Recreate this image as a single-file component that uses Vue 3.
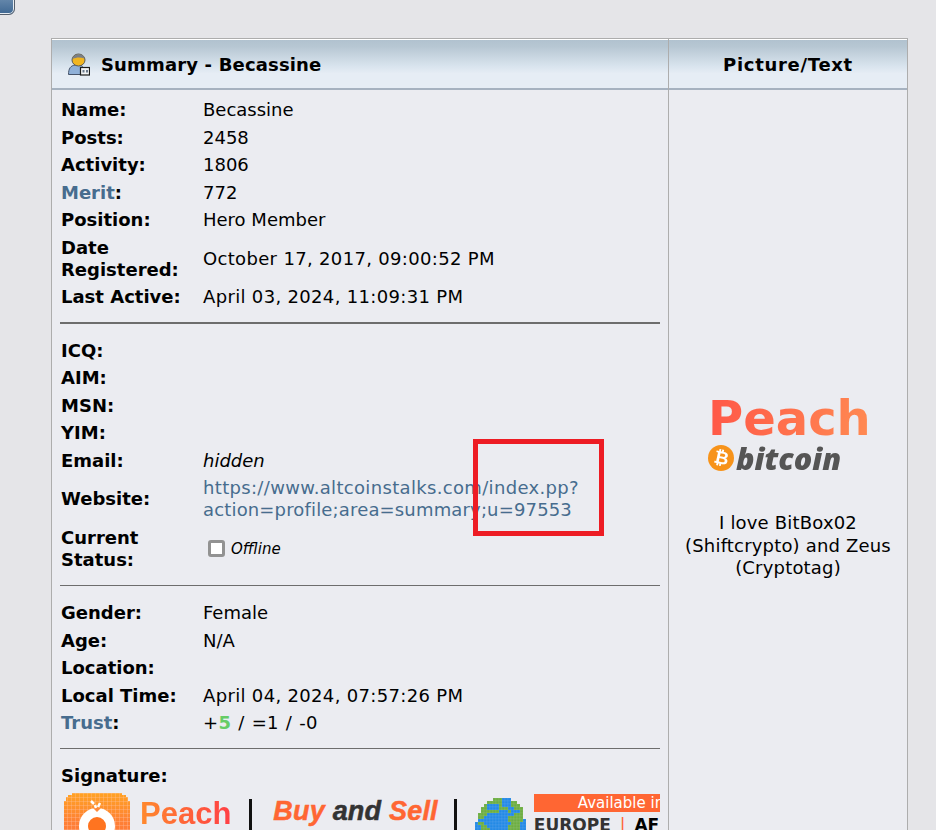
<script setup>
const group1 = [
  { label: 'Name:', value: 'Becassine' },
  { label: 'Posts:', value: '2458' },
  { label: 'Activity:', value: '1806' },
  { label: 'Merit', value: '772', link: true },
  { label: 'Position:', value: 'Hero Member' },
  { label: 'Date Registered:', value: 'October 17, 2017, 09:00:52 PM', wide: true },
  { label: 'Last Active:', value: 'April 03, 2024, 11:09:31 PM', wide: true },
]
const group2 = ['ICQ:', 'AIM:', 'MSN:', 'YIM:']
const group3 = [
  { label: 'Gender:', value: 'Female' },
  { label: 'Age:', value: 'N/A' },
  { label: 'Location:', value: '' },
  { label: 'Local Time:', value: 'April 04, 2024, 07:57:26 PM', wide: true },
]
const globeRows = [
  '......gggbbb.....',
  '....gggggbbbgg...',
  '...gbbbbgbbbggg..',
  '..ggbbbbgggbbggg.',
  '..ggggggbbbgbbbg.',
  '.gggbbbbbbbbbggg.',
  '.ggbbbbbbbbggggg.',
  '.bbbbbbbbbbgggggb',
  'bggbbbbbbbbbgggbb',
  'bbggbbbbbbbggggbb',
  'bbgggbbbbbbggggbb',
]
const globeCells = globeRows.flatMap((row, y) =>
  [...row].flatMap((c, x) =>
    c === '.' ? [] : [{ key: `${x}-${y}`, x: x * 3, y: y * 3, fill: c === 'g' ? '#6cae42' : '#2389e6' }],
  ),
)
</script>

<template>
  <div class="page">
    <div class="corner-button"></div>
    <div class="annotation"></div>
    <div class="table">
      <div class="left-col">
        <div class="head head-left">
          <svg class="user-icon" width="22" height="23" viewBox="0 0 22 23">
            <path d="M.5 21.500c0-6 2-9 7-9.500h5c2 .5 3 3 3 9.500z" fill="#8fb0d8" stroke="#45536a" stroke-width="1" />
            <ellipse cx="10.500" cy="7" rx="6.500" ry="6" fill="#f0b520" stroke="#5b5b55" stroke-width="1" />
            <path d="M4.500 6c1-6 11-6.500 12-.5-4-1.500-8-1.500-12 .5z" fill="#7a7f86" />
            <rect x="12.500" y="14.500" width="9" height="7.500" fill="#f2f4f6" stroke="#1c1c1c" stroke-width="1.200" />
            <path d="M14.500 17h2v2.500h-2zM18 17h2v2.500h-2z" fill="#6b7a8c" />
          </svg>
          <span class="head-title">Summary - Becassine</span>
        </div>
        <div class="body-left">
          <div class="rows">
            <template v-for="r in group1" :key="r.label">
              <div class="label"><span v-if="r.link"><a class="link">{{ r.label }}</a>:</span><template v-else>{{ r.label }}</template></div>
              <div class="value" :class="{ wide: r.wide }">{{ r.value }}</div>
            </template>
          </div>
          <hr class="rule thick" />
          <div class="rows">
            <template v-for="l in group2" :key="l">
              <div class="label">{{ l }}</div>
              <div class="value"></div>
            </template>
            <div class="label">Email:</div>
            <div class="value"><em>hidden</em></div>
            <div class="label">Website:</div>
            <div class="value link"><span class="wide">https://www.altcoinstalks.com/index.pp?</span><br /><span class="semi">action=profile;area=summary;u=97553</span></div>
            <div class="label">Current Status:</div>
            <div class="value status"><span class="box"></span><em>Offline</em></div>
          </div>
          <hr class="rule" />
          <div class="rows">
            <template v-for="r in group3" :key="r.label">
              <div class="label">{{ r.label }}</div>
              <div class="value" :class="{ wide: r.wide }">{{ r.value }}</div>
            </template>
            <div class="label"><a class="link">Trust</a>:</div>
            <div class="value trust">+<b class="green">5</b> / =1 / -0</div>
          </div>
          <hr class="rule last" />
          <div class="sig-title">Signature:</div>
          <div class="signature">
            <div class="peach-badge">
              <svg width="68" height="60" viewBox="0 0 68 60">
                <defs>
                  <pattern id="pix" width="4" height="4" patternUnits="userSpaceOnUse">
                    <path d="M4 0H0V4" fill="none" stroke="#ffc8b4" stroke-opacity=".7" stroke-width=".8" />
                  </pattern>
                  <linearGradient id="peachfill" x1="0" y1="0" x2="0" y2="1">
                    <stop offset="0" stop-color="#ffa324" />
                    <stop offset=".5" stop-color="#ff7f36" />
                    <stop offset="1" stop-color="#ff7a3c" />
                  </linearGradient>
                </defs>
                <path d="M9 0H59V2H63V4H65V8H67V52H65V56H63V58H59V60H9V58H5V56H3V52H1V8H3V4H5V2H9z" fill="url(#peachfill)" />
                <path d="M9 0H59V2H63V4H65V8H67V52H65V56H63V58H59V60H9V58H5V56H3V52H1V8H3V4H5V2H9z" fill="url(#pix)" />
                <circle cx="34" cy="33" r="13.500" fill="#ff7420" stroke="#fff" stroke-width="9" />
                <path d="M30 15h8l-4 4z" fill="#ff8a3a" />
                <path d="M28 8l3 3M37 10l-2 4M32 12l1 3" stroke="#fff" stroke-width="2.500" />
              </svg>
            </div>
            <span class="peach-word">Peach</span>
            <span class="bar"></span>
            <span class="slogan"><i class="orange">Buy</i> <i class="dark">and</i> <i class="orange">Sell</i></span>
            <span class="bar"></span>
            <svg class="globe" width="51" height="33" viewBox="0 0 51 33">
              <rect
                v-for="c in globeCells"
                :key="c.key"
                :x="c.x"
                :y="c.y"
                width="3"
                height="3"
                :fill="c.fill"
                stroke="#ffffff"
                stroke-opacity=".14"
                stroke-width=".5"
              />
            </svg>
            <div class="regions">
              <div class="avail">Available in</div>
              <div class="places">EUROPE <span class="pipe">|</span> <span class="africa">AFRICA</span></div>
            </div>
          </div>
        </div>
      </div>
      <div class="right-col">
        <div class="head head-right"><span class="right-title">Picture/Text</span></div>
        <div class="body-right">
          <div class="logo">
            <div class="logo-peach">Peach</div>
            <div class="logo-btc">
              <span class="coin"><span class="coin-glyph">₿</span></span><span class="logo-bitcoin">bitcoin</span>
            </div>
          </div>
          <div class="blurb">I love BitBox02<br />(Shiftcrypto) and Zeus<br />(Cryptotag)</div>
        </div>
      </div>
    </div>
  </div>
</template>

<style>
html, body { margin: 0; background: #e5e5e8; }
</style>

<style scoped>
.page {
  position: relative;
  width: 936px;
  height: 830px;
  overflow: hidden;
  background: #e5e5e8;
  font-family: "DejaVu Sans", Verdana, sans-serif;
  font-size: 18px;
  color: #000;
  padding: 38px 28px 0 51px;
  box-sizing: border-box;
}
.corner-button {
  position: absolute;
  left: -12px;
  top: -12px;
  width: 27px;
  height: 27px;
  box-sizing: border-box;
  border-radius: 6px;
  background: linear-gradient(#7f9dbb, #3f6893);
  border: 1px solid #555f6c;
  box-shadow: inset 0 0 0 1px #e8edf2;
}
.annotation {
  position: absolute;
  left: 473px;
  top: 439px;
  width: 131px;
  height: 97px;
  border: 5px solid #ed1c24;
  box-sizing: border-box;
  z-index: 2;
}
.table {
  display: grid;
  grid-template-columns: 617px 238px;
  width: 857px;
  height: 900px;
  background: #ebecf1;
  border: 1px solid #adadad;
  border-bottom: 0;
  box-sizing: border-box;
}
.left-col { border-right: 1px solid #adadad; min-width: 0; }
.head {
  height: 51px;
  box-sizing: border-box;
  border-top: 1px solid #fff;
  border-bottom: 2px solid #a6b2c0;
  background: linear-gradient(#b1c2cf 0, #b7c7d3 14%, #d9e4ee 55%, #e6edf5 70%, #e6edf5 100%);
  font-weight: bold;
  display: flex;
  align-items: center;
}
.head-left { padding-left: 16px; gap: 11px; }
.head-title { letter-spacing: .16px; }
.head-right { justify-content: center; }
.right-title { letter-spacing: .7px; }
.user-icon { flex: none; }
.body-left { padding: 6.400px 8px 0 8px; overflow: hidden; }
.rows {
  display: grid;
  grid-template-columns: 142px 1fr;
  padding-left: 1px;
  align-items: center;
  line-height: 22px;
}
.label { font-weight: bold; padding: 2.750px 0; }
.value { padding: 2.750px 0; }
.wide { letter-spacing: .33px; }
.semi { letter-spacing: .16px; }
.link { color: #476c8e; }
.status { display: flex; align-items: center; gap: 6px; padding-left: 5px; font-size: 15px; }
.box {
  width: 11px;
  height: 11px;
  border: 3px solid #929292;
  border-radius: 3px;
  background: #fff;
  display: inline-block;
}
.green { color: #66cc66; }
.trust { letter-spacing: .3px; word-spacing: 1px; }
.rule {
  border: 0;
  border-top: 1px solid #6d6d6d;
  margin: 12px 0 13px;
  height: 0;
}
.rule.thick { border-top-width: 2px; margin: 11px 0 13px; }
.rule.last { margin: 11px 0 16px; }
.sig-title { font-weight: bold; line-height: 22px; margin: 0 0 6px 1px; }
.signature {
  display: flex;
  align-items: flex-start;
  width: 600px;
  height: 60px;
  overflow: hidden;
  white-space: nowrap;
}
.peach-badge { margin-left: 3px; width: 68px; flex: none; }
.peach-word {
  font-family: "Liberation Sans", Arial, sans-serif;
  font-weight: bold;
  font-size: 31px;
  line-height: 36px;
  margin: 3px 0 0 9px;
  background: linear-gradient(90deg, #ff8a2d, #ff3f45);
  -webkit-background-clip: text;
  background-clip: text;
  color: transparent;
}
.bar {
  width: 3px;
  height: 40px;
  margin-top: 6px;
  background: #111;
  flex: none;
}
.peach-word + .bar { margin-left: 18px; }
.slogan {
  font-family: "Liberation Sans", Arial, sans-serif;
  font-weight: bold;
  font-size: 27px;
  line-height: 30px;
  margin: 3px 16px 0 21px;
  letter-spacing: .2px;
}
.orange { color: #ff6633; -webkit-text-stroke: .5px #ff6633; }
.dark { color: #333; -webkit-text-stroke: .5px #333; }
.globe { margin-left: 18px; margin-top: 5px; flex: none; }
.regions { margin-left: 8px; width: 126px; flex: none; overflow: hidden; }
.avail {
  background: #ff6633;
  color: #fff;
  font-size: 15px;
  line-height: 18px;
  white-space: nowrap;
  overflow: hidden;
  padding-left: 44px;
  margin-top: 1px;
}
.places { font-weight: bold; font-size: 17px; line-height: 24px; color: #333; margin-top: 1px; word-spacing: 3px; }
.pipe { color: #ff6633; font-weight: normal; }
.africa { color: #000; }
.body-right {
  display: flex;
  flex-direction: column;
  align-items: center;
  padding-top: 301px;
  text-align: center;
}
.logo { width: 160px; height: 93px; filter: blur(.4px); }
.logo-peach {
  font-family: "DejaVu Sans", "Open Sans", sans-serif;
  font-weight: bold;
  font-size: 48px;
  line-height: 54px;
  text-align: center;
  white-space: nowrap;
  background: linear-gradient(100deg, #ff5647, #ff8a52);
  -webkit-background-clip: text;
  background-clip: text;
  color: transparent;
}
.logo-btc { display: flex; align-items: center; margin-top: -5px; }
.coin {
  width: 26px;
  height: 26px;
  border-radius: 50%;
  background: #f7931a;
  color: #fff;
  font-size: 18px;
  font-weight: bold;
  line-height: 26px;
  text-align: center;
  flex: none;
}
.coin-glyph { display: inline-block; transform: rotate(12deg); }
.logo-bitcoin {
  font-family: "Open Sans", sans-serif;
  font-weight: 800;
  font-style: italic;
  font-size: 30.500px;
  line-height: 36px;
  color: #555;
  margin-left: 2px;
}
.blurb { margin-top: 28px; line-height: 22.500px; letter-spacing: .18px; }
</style>
